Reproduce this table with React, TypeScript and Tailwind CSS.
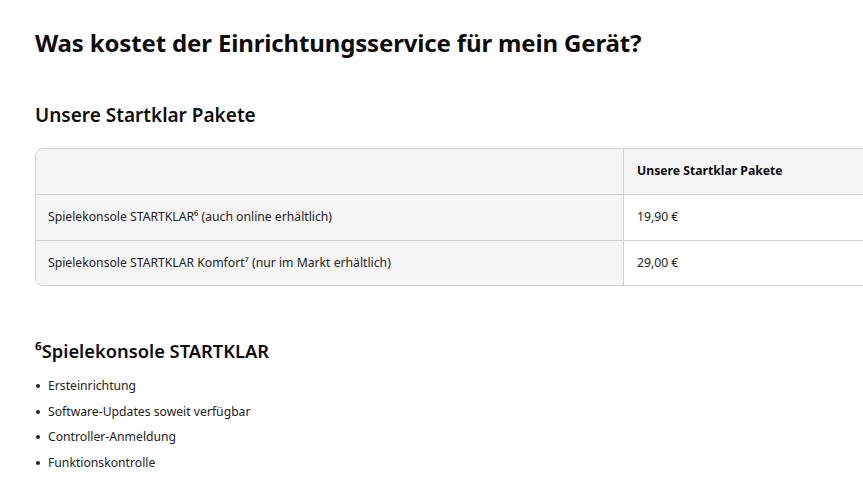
const rows = [
  { name: "Spielekonsole STARTKLAR⁶ (auch online erhältlich)", price: "19,90 €" },
  { name: "Spielekonsole STARTKLAR Komfort⁷ (nur im Markt erhältlich)", price: "29,00 €" }
];

const features = [
  "Ersteinrichtung",
  "Software-Updates soweit verfügbar",
  "Controller-Anmeldung",
  "Funktionskontrolle"
];

export default function App() {
  return (
    <main className="min-h-screen w-full overflow-hidden bg-white text-[#0d0d0d] [font-family:'Noto_Sans',sans-serif]">
      <section className="px-[35px] pt-[25px]">
        <h1 className="text-[24px] font-bold leading-[36px] tracking-[-0.15px]">
          Was kostet der Einrichtungsservice für mein Gerät?
        </h1>

        <h2 className="mt-[40px] text-[19px] font-semibold leading-[28px]">Unsere Startklar Pakete</h2>

        <div className="mt-[19px] w-[1000px] overflow-hidden rounded-[8px] border border-[#d0d0d0] text-[12.2px]">
          <div className="grid grid-cols-[588px_1fr]">
            <div className="h-[45px] border-r border-[#d0d0d0] bg-[#f5f5f5]" />
            <div className="flex h-[45px] items-center bg-[#f5f5f5] px-[13px] font-bold">Unsere Startklar Pakete</div>
            {rows.map((row) => (
              <div key={row.name} className="contents">
                <div className="flex h-[45.5px] items-center border-t border-r border-[#d0d0d0] bg-[#f5f5f5] px-[12px] text-[#222]">
                  {row.name}
                </div>
                <div className="flex h-[45.5px] items-center border-t border-[#d0d0d0] bg-white px-[13px] text-[#222]">
                  {row.price}
                </div>
              </div>
            ))}
          </div>
        </div>

        <h3 className="mt-[52px] text-[18.3px] font-semibold leading-[26px]">⁶Spielekonsole STARTKLAR</h3>
        <ul className="mt-[13px] flex flex-col gap-[7.7px] text-[12.2px] leading-[18px] text-[#222]">
          {features.map((item) => (
            <li key={item} className="flex items-center gap-[8px] pl-[1px]">
              <span className="h-[4px] w-[4px] rounded-full bg-[#222]" />
              {item}
            </li>
          ))}
        </ul>
      </section>
    </main>
  );
}
